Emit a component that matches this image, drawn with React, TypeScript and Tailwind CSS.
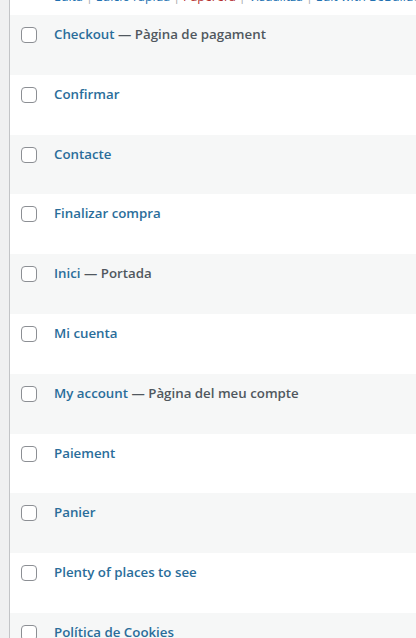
const rows: { title: string; state?: string }[] = [
  { title: "Checkout", state: "Pàgina de pagament" },
  { title: "Confirmar" },
  { title: "Contacte" },
  { title: "Finalizar compra" },
  { title: "Inici", state: "Portada" },
  { title: "Mi cuenta" },
  { title: "My account", state: "Pàgina del meu compte" },
  { title: "Paiement" },
  { title: "Panier" },
  { title: "Plenty of places to see" },
  { title: "Política de Cookies" },
];

const Sep = () => <span className="px-[3px] text-[#a7aaad]">|</span>;

const App = () => {
  return (
    <div
      className="flex h-[638px] w-[416px] overflow-hidden bg-[#f0f0f1] text-[13.3px]"
      style={{ fontFamily: '"Open Sans", "Noto Sans", sans-serif' }}
    >
      <div className="w-[9px] shrink-0" />
      <div className="flex min-w-0 flex-1 flex-col border-l border-[#c3c4c7] bg-white">
        <div className="relative h-[15px] shrink-0 bg-white">
          <div className="absolute left-[44px] top-[-12px] whitespace-nowrap text-[12.4px] text-[#2271b1]">
            <span>Edita</span>
            <Sep />
            <span>Edició ràpida</span>
            <Sep />
            <span className="text-[#b32d2e]">Paperera</span>
            <Sep />
            <span>Visualitza</span>
            <Sep />
            <span>Edit with BeBuilder</span>
          </div>
        </div>
        {rows.map((r, i) => (
          <div
            key={r.title}
            className={`flex h-[59.8px] shrink-0 items-start pt-[10px] ${
              i % 2 === 0 ? "bg-[#f6f7f7]" : "bg-white"
            }`}
          >
            <div className="ml-[11px] mt-[2px] h-4 w-4 shrink-0 rounded-[4px] border border-[#8c8f94] bg-white" />
            <div className="ml-[17px] whitespace-nowrap leading-[18px]">
              <span className="font-semibold text-[#2a6d9a]">{r.title}</span>
              {r.state && (
                <span className="font-semibold text-[#50575e]"> — {r.state}</span>
              )}
            </div>
          </div>
        ))}
      </div>
    </div>
  );
};

export default App;
